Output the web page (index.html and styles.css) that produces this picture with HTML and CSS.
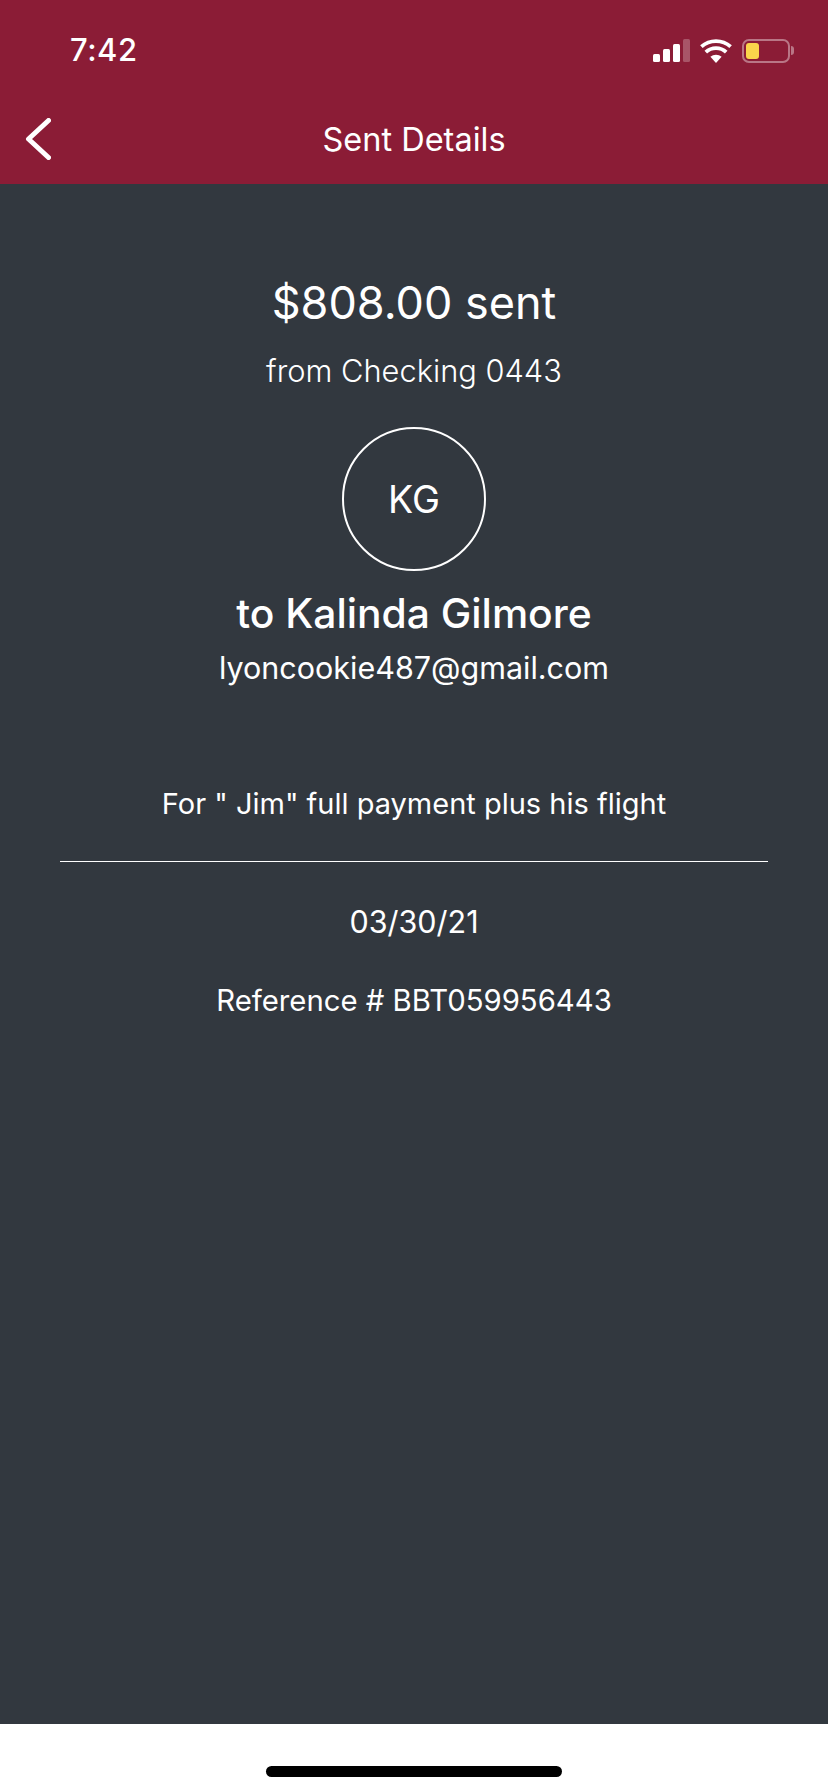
FILE: index.html
```html
<!DOCTYPE html>
<html lang="en">
<head>
    <meta charset="UTF-8">
    <meta name="viewport" content="width=device-width, initial-scale=1.0">
    <title>Sent Details</title>
    <link rel="stylesheet" href="styles.css">
</head>
<body>
    <div class="screen">
        <header class="top-bar">
            <div class="status-bar">
                <span class="time">7:42</span>
                <div class="status-icons">
                    <svg class="signal" width="37" height="23" viewBox="0 0 37 23">
                        <rect x="0" y="15" width="7" height="8" rx="1.5" fill="#fff"/>
                        <rect x="10" y="10" width="7" height="13" rx="1.5" fill="#fff"/>
                        <rect x="20" y="5" width="7" height="18" rx="1.5" fill="#fff"/>
                        <rect x="30" y="0" width="7" height="23" rx="1.5" fill="#fff" fill-opacity="0.25"/>
                    </svg>
                    <svg class="wifi" width="32" height="24" viewBox="0 0 32 24">
                        <path d="M16 24 L10.4 17.8 A8.4 8.4 0 0 1 21.6 17.8 Z" fill="#fff"/>
                        <path d="M5.8 13.2 A15 15 0 0 1 26.2 13.2" fill="none" stroke="#fff" stroke-width="3.8"/>
                        <path d="M1.4 7.6 A22 22 0 0 1 30.6 7.6" fill="none" stroke="#fff" stroke-width="3.8"/>
                    </svg>
                    <div class="battery">
                        <div class="battery-body">
                            <div class="battery-level"></div>
                        </div>
                        <div class="battery-tip"></div>
                    </div>
                </div>
            </div>
            <div class="nav-bar">
                <svg class="back" width="26" height="42" viewBox="0 0 26 42">
                    <path d="M23.5 2.5 L3.5 21 L23.5 39.5" fill="none" stroke="#fff" stroke-width="5" stroke-linecap="round" stroke-linejoin="round"/>
                </svg>
                <h1>Sent Details</h1>
            </div>
        </header>

        <main class="details">
            <p class="amount">$808.00 sent</p>
            <p class="account">from Checking 0443</p>
            <div class="avatar">KG</div>
            <p class="recipient">to Kalinda Gilmore</p>
            <p class="email">lyoncookie487@gmail.com</p>
            <p class="memo">For " Jim" full payment plus his flight</p>
            <hr class="divider">
            <p class="date">03/30/21</p>
            <p class="reference">Reference # BBT059956443</p>
        </main>

        <footer class="home-area">
            <div class="home-bar"></div>
        </footer>
    </div>
</body>
</html>
```

FILE: styles.css
```css
body {
    margin: 0;
    font-family: Inter, "Liberation Sans", sans-serif;
    color: #fff;
    background-color: #fff;
}
p {
    margin: 0;
}
.screen {
    width: 828px;
    height: 1792px;
    display: flex;
    flex-direction: column;
    overflow: hidden;
}
.top-bar {
    height: 184px;
    background-color: #8b1c36;
    flex-shrink: 0;
}
.status-bar {
    height: 98px;
    display: flex;
    justify-content: space-between;
    align-items: center;
    padding: 0 34px 0 70px;
}
.time {
    font-size: 31px;
    font-weight: 500;
    letter-spacing: 0.5px;
}
.status-icons {
    display: flex;
    align-items: center;
    gap: 10px;
    margin-top: 3px;
}
.battery {
    display: flex;
    align-items: center;
    gap: 1px;
}
.battery-body {
    width: 48px;
    height: 24px;
    box-sizing: border-box;
    border: 2px solid rgba(255,255,255,0.4);
    border-radius: 7px;
    padding: 2px;
}
.battery-level {
    width: 13px;
    height: 100%;
    background-color: #fbd54b;
    border-radius: 3px;
}
.battery-tip {
    width: 3px;
    height: 9px;
    background-color: rgba(255,255,255,0.4);
    border-radius: 0 4px 4px 0;
}
.nav-bar {
    position: relative;
    height: 86px;
    display: flex;
    align-items: center;
    justify-content: center;
}
.nav-bar h1 {
    margin: 0;
    font-size: 32.5px;
    font-weight: 400;
    position: relative;
    top: -1.5px;
}
.back {
    position: absolute;
    left: 25px;
    top: 20px;
}
.details {
    flex: 1;
    background-color: #32383f;
    text-align: center;
    padding: 92px 60px 0;
}
.amount {
    font-size: 45px;
    line-height: 54px;
}
.account {
    font-size: 30.8px;
    line-height: 38px;
    font-weight: 300;
    margin-top: 22px;
}
.avatar {
    width: 144px;
    height: 144px;
    box-sizing: border-box;
    border: 2px solid #fff;
    border-radius: 50%;
    margin: 37px auto 0;
    display: flex;
    align-items: center;
    justify-content: center;
    font-size: 37.5px;
}
.recipient {
    font-size: 40.8px;
    line-height: 48px;
    font-weight: 500;
    margin-top: 18px;
}
.email {
    font-size: 30.5px;
    line-height: 38px;
    margin-top: 12px;
}
.memo {
    font-size: 29px;
    line-height: 36px;
    margin-top: 99px;
}
.divider {
    border: none;
    border-top: 1px solid #fff;
    margin: 39px 0 0;
}
.date {
    font-size: 30.5px;
    line-height: 38px;
    margin-top: 41px;
}
.reference {
    font-size: 29.3px;
    line-height: 36px;
    margin-top: 42px;
}
.home-area {
    height: 68px;
    background-color: #fff;
    flex-shrink: 0;
    display: flex;
    justify-content: center;
    padding-top: 42px;
    box-sizing: border-box;
}
.home-bar {
    width: 296px;
    height: 11px;
    background-color: #000;
    border-radius: 6px;
}
```
